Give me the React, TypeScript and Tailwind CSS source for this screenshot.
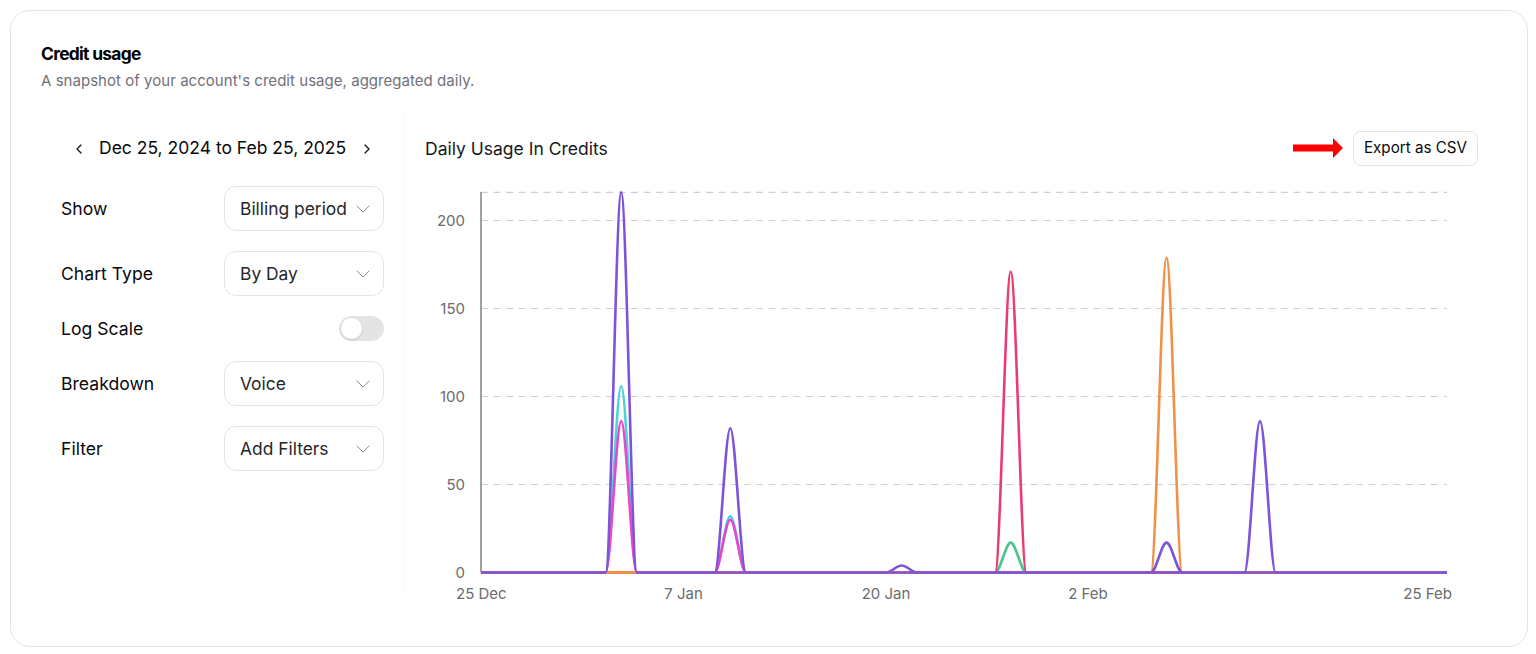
import React from "react";
import { ChevronDown, ChevronLeft, ChevronRight } from "lucide-react";

const X0 = 481;
const DX = 966 / 62;
const Y0 = 572.5;
const K = 1.76;

function line(peaks: Record<number, number>) {
  const days = Object.keys(peaks).map(Number).sort((a, b) => a - b);
  let d = `M${X0} ${Y0}`;
  for (const day of days) {
    const x = X0 + day * DX;
    const y = Y0 - peaks[day] * K;
    const l = x - DX;
    const r = x + DX;
    d += `L${l.toFixed(2)} ${Y0}C${(l + DX / 3).toFixed(2)} ${Y0} ${(x - DX / 3).toFixed(2)} ${y} ${x.toFixed(2)} ${y}`;
    d += `C${(x + DX / 3).toFixed(2)} ${y} ${(r - DX / 3).toFixed(2)} ${Y0} ${r.toFixed(2)} ${Y0}`;
  }
  return d + `L${X0 + 966} ${Y0}`;
}

const series = [
  { color: "#4fd1d9", peaks: { 9: 106, 16: 32 } },
  { color: "#e649c8", peaks: { 9: 86, 16: 30 } },
  { color: "#4cc38a", peaks: { 34: 17 } },
  { color: "#e93d6f", peaks: { 34: 171 } },
  { color: "#f0914a", peaks: { 44: 179 } },
];
const purple = { 9: 216, 16: 82, 27: 4, 44: 17, 50: 86 };

function Row({ label, value }: { label: string; value: string }) {
  return (
    <div className="flex h-[45px] items-center justify-between">
      <span className="pt-[2px] text-[17.6px] text-[#09090b]">{label}</span>
      <div className="flex h-[45px] w-40 items-center justify-between rounded-xl border border-[#e4e4e7] pl-[15px] pr-[8px] text-[17.4px] whitespace-nowrap text-[#27272a]">
        <span className="pt-[2px]">{value}</span>
        <ChevronDown className="size-6 shrink-0 text-[#8a8a94]" strokeWidth={1} />
      </div>
    </div>
  );
}

function Chart() {
  const grid = [216, 200, 150, 100, 50];
  return (
    <svg viewBox="425 180 1053 430" className="block h-[430px] w-[1053px]" style={{ fontFamily: "Inter, sans-serif" }}>
      {grid.map((v) => (
        <line key={v} x1={X0} x2={1447} y1={Y0 - v * K} y2={Y0 - v * K} stroke="#cfcfcf" strokeWidth={1.2} strokeDasharray="7 5.5" />
      ))}
      <line x1={X0} x2={X0} y1={192} y2={Y0} stroke="#808080" strokeWidth={1.5} />
      {[200, 150, 100, 50, 0].map((v) => (
        <text key={v} x={465} y={Y0 - v * K + 5} textAnchor="end" fontSize={15} fill="#6b6b6b">
          {v}
        </text>
      ))}
      <text x={456} y={599} fontSize={15} fill="#6b6b6b">25 Dec</text>
      <text x={683.5} y={599} textAnchor="middle" fontSize={15} fill="#6b6b6b">7 Jan</text>
      <text x={886} y={599} textAnchor="middle" fontSize={15} fill="#6b6b6b">20 Jan</text>
      <text x={1088} y={599} textAnchor="middle" fontSize={15} fill="#6b6b6b">2 Feb</text>
      <text x={1452} y={599} textAnchor="end" fontSize={15} fill="#6b6b6b">25 Feb</text>
      <path d={`M${X0} ${Y0}H${X0 + 966}`} stroke="#8555cf" strokeWidth={2.6} />
      {series.map((s) => (
        <path key={s.color} d={line(s.peaks)} fill="none" stroke={s.color} strokeWidth={2.6} />
      ))}
      <path d={`M${X0 + 8 * DX} ${Y0}H${X0 + 10 * DX}`} stroke="#f0914a" strokeWidth={2.6} />
      <path d={line(purple)} fill="none" stroke="#7c53d9" strokeWidth={2.6} />
      <path d={`M${X0} ${Y0}H${X0 + 8 * DX}M${X0 + 10 * DX} ${Y0}H${X0 + 966}`} stroke="#8555cf" strokeWidth={2.6} />
    </svg>
  );
}

export default function App() {
  return (
    <div className="h-[654px] w-[1536px] bg-white p-2.5 font-['Inter',sans-serif]">
      <div className="h-[637px] w-[1518px] rounded-[20px] border border-[#e4e4e7] pl-[30px] pr-[49px] pt-[33px]">
        <h2 className="text-[17.4px] leading-5 font-bold tracking-[-0.04em] text-black">Credit usage</h2>
        <p className="mt-[7px] text-[15px] leading-5 tracking-[0.035px] text-[#71717a]">
          A snapshot of your account's credit usage, aggregated daily.
        </p>
        <div className="mt-5 flex">
          <div className="h-[484px] w-[364px] shrink-0 border-r border-[#f8f8f8] pl-5 pr-5">
            <div className="flex h-[75px] items-center">
              <ChevronLeft className="ml-[10px] size-4 text-[#18181b]" strokeWidth={2} />
              <span className="ml-[12px] text-[17.5px] whitespace-nowrap text-[#09090b]">Dec 25, 2024 to Feb 25, 2025</span>
              <ChevronRight className="ml-[13px] size-4 text-[#18181b]" strokeWidth={2} />
            </div>
            <div className="flex flex-col gap-5">
              <Row label="Show" value="Billing period" />
              <Row label="Chart Type" value="By Day" />
              <div className="flex h-[25px] items-center justify-between">
                <span className="pt-[2px] text-[17.6px] text-[#09090b]">Log Scale</span>
                <div className="flex h-[25px] w-[45px] items-center rounded-full bg-[#e4e4e7] p-[2px]">
                  <div className="size-[21px] rounded-full bg-white shadow-sm" />
                </div>
              </div>
              <Row label="Breakdown" value="Voice" />
              <Row label="Filter" value="Add Filters" />
            </div>
          </div>
          <div className="ml-5 w-[1053px] shrink-0">
            <div className="flex h-[69px] items-center justify-between pt-[5px]">
              <span className="pt-[2px] text-[17.5px] text-[#18181b]">Daily Usage In Credits</span>
              <div className="flex items-center gap-[9px]">
                <svg width="52" height="24" viewBox="0 0 52 24" className="-mt-[1px] block">
                  <path d="M1 8.5H41V2L51 12L41 22V15.5H1Z" fill="#ff0000" />
                </svg>
                <div className="flex h-[35px] w-[125px] items-center justify-center rounded-lg border border-[#e4e4e7] text-[15.2px] text-[#09090b]">
                  Export as CSV
                </div>
              </div>
            </div>
            <Chart />
          </div>
        </div>
      </div>
    </div>
  );
}
